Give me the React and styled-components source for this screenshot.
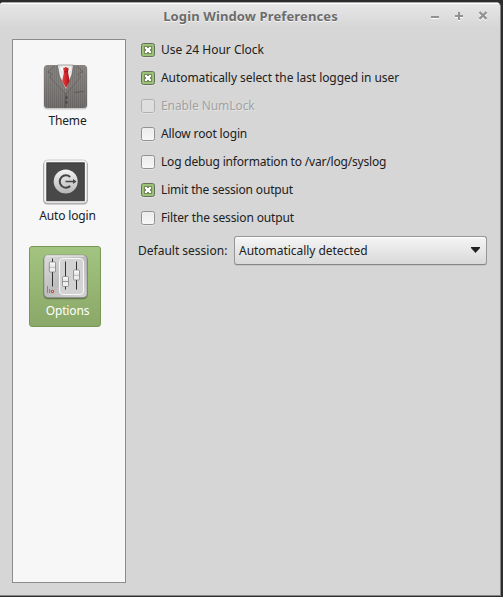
import React from "react";
import styled, { createGlobalStyle, css } from "styled-components";

const GlobalStyle = createGlobalStyle`
  * { box-sizing: border-box; }
  body { margin: 0; background: #2d2d2d; overflow: hidden; }
`;

const Desktop = styled.div`
  width: 503px;
  height: 597px;
  padding: 2px 2px 1px 0;
  background: #2d2d2d;
  font-family: "Noto Sans", sans-serif;
  font-size: 12px;
  color: #212121;
`;

const Window = styled.main`
  height: 594px;
  display: flex;
  flex-direction: column;
  background: #d6d6d6;
  border: solid #868686;
  border-width: 0 1px 1px 0;
  border-radius: 4px 5px 0 0;
  overflow: hidden;
`;

const TitleBar = styled.header`
  flex: none;
  height: 26px;
  display: grid;
  grid-template-columns: 1fr auto;
  background: linear-gradient(#e7e7e7, #d6d6d6);
  border-top: 1px solid #aaa;
  box-shadow: inset 0 1px #fff;
`;

const Title = styled.h1`
  margin: 0;
  padding: 2px 0 0 72px;
  text-align: center;
  font-size: 13px;
  line-height: 22px;
  font-weight: 700;
  letter-spacing: 0.12px;
  color: #6c6c6c;
  text-shadow: 0 1px #f5f5f5;
`;

const WindowButtons = styled.div`
  display: flex;
  gap: 12px;
  padding: 7px 11px 0 0;
`;

const WindowButton = styled.svg`
  width: 12px;
  height: 13px;
  fill: none;
  stroke: #929292;
  stroke-width: 2;
  filter: drop-shadow(0 1px 0 #fff);
`;

const Content = styled.div`
  flex: 1;
  min-height: 0;
  display: flex;
  padding: 11px 13px 12px 12px;
`;

const Sidebar = styled.nav`
  width: 114px;
  height: 544px;
  padding: 16px;
  display: flex;
  flex-direction: column;
  gap: 14px;
  background: #f7f7f7;
  border: 1px solid #8c8c8c;
`;

const NavItem = styled.div`
  width: 72px;
  height: 81px;
  flex: none;
  padding: 6px 0 0;
  display: flex;
  flex-direction: column;
  align-items: center;
  border: 1px solid transparent;
  border-radius: 3px;
  ${(p) => p.$selected && css`
    background: linear-gradient(#a3c480, #8aa868);
    border-color: #789755;
    color: #fff;
  `}
`;

const NavIcon = styled.svg`
  width: 48px;
  height: 48px;
`;

const NavLabel = styled.span`
  padding: 1px 0 0 5px;
  line-height: 18px;
  letter-spacing: -0.16px;
  white-space: nowrap;
`;

const Options = styled.section`
  flex: 1;
  padding: 0 0 0 12px;
`;

const CheckRow = styled.div`
  height: 28px;
  padding: 4px 0 0 3px;
  display: flex;
  align-items: flex-start;
  gap: 6px;
  line-height: 14px;
  letter-spacing: ${(p) => p.$tracking || 0}px;
  white-space: nowrap;
  ${(p) => p.$disabled && css`
    color: #a2a2a2;
    text-shadow: 1px 1px #e5e5e5;
  `}
`;

const CheckBox = styled.span`
  width: 14px;
  height: 14px;
  border: 1px solid ${(p) => (p.$checked ? "#65725a" : p.$disabled ? "#b0b0b0" : "#929292")};
  border-radius: 2.5px;
  background: ${(p) => (p.$checked ? "#9cc078" : p.$disabled ? "#dedede" : "linear-gradient(#ececec, #f7f7f7)")};
  box-shadow: 0 1px #e2e2e2;
  display: flex;
`;

const CheckMark = styled.svg`
  width: 12px;
  height: 12px;
`;

const SessionRow = styled.div`
  display: flex;
  align-items: flex-start;
  height: 30px;
  margin-top: 1px;
`;

const SessionLabel = styled.span`
  width: 96px;
  flex: none;
  line-height: 29px;
  white-space: nowrap;
`;

const Select = styled.div`
  width: 253px;
  height: 29px;
  padding: 0 6px 1px 4px;
  display: flex;
  align-items: center;
  justify-content: space-between;
  letter-spacing: -0.04px;
  background: linear-gradient(#f5f5f5, #d9d9d9);
  border: 1px solid #969696;
  border-bottom-color: #858585;
  border-radius: 3px;
  box-shadow: inset 0 1px #fff, 0 1px #c5c5c5;
`;

const Arrow = styled.svg`
  width: 9px;
  height: 6px;
`;

function ThemeIcon() {
  return (
    <NavIcon viewBox="0 0 48 48">
      <defs>
        <linearGradient id="suit" x2="0" y2="1">
          <stop stopColor="#83807e" /><stop offset="1" stopColor="#666362" />
        </linearGradient>
        <linearGradient id="tie">
          <stop stopColor="#e84848" /><stop offset=".5" stopColor="#d3252b" /><stop offset="1" stopColor="#a81018" />
        </linearGradient>
        <pattern id="pinstripe" width="2" height="4" patternUnits="userSpaceOnUse">
          <path d="M.5 0v4" stroke="#aaa" strokeWidth=".6" opacity=".35" />
        </pattern>
      </defs>
      <rect x="2.5" y="3" width="44" height="43.5" rx="4" fill="#777" opacity=".35" />
      <rect x="3" y="2" width="43" height="43" rx="3.5" fill="url(#suit)" />
      <path d="m13 3-6.5 6L11 11l-2.5 3L25 31l14.5-17-2.5-3 5-2-5.5-6" fill="#787572" stroke="#55514f" strokeWidth=".7" />
      <rect x="3" y="2" width="43" height="43" rx="3.5" fill="url(#pinstripe)" />
      <path d="M16.5 2h15.800l-1.300 9-6 16-6.500-14z" fill="#ededed" stroke="#54504e" strokeWidth=".5" />
      <path d="m18 3 5 2-2 5zM31 3l-4.500 2 2.500 5z" fill="#fff" stroke="#bcbcbc" strokeWidth=".4" />
      <path d="m22 5.500 2.800-1.500 2.900 1.500-.7 3.200 1.500 9.300-3.400 7-4-7 2-9.300z" fill="url(#tie)" />
      <path d="m22.700 9 4.300-.5" stroke="#8d1014" strokeWidth=".7" />
      <path d="m33 29.500 10-1M25 31l-1 14" fill="none" stroke="#53504d" strokeWidth=".8" />
      <g fill="#484542"><circle cx="25.500" cy="34.500" r="1.200" /><circle cx="25.500" cy="39.500" r="1.200" /></g>
    </NavIcon>
  );
}

function LoginIcon() {
  return (
    <NavIcon viewBox="0 0 48 48">
      <defs>
        <linearGradient id="disc" x2="0" y2="1">
          <stop stopColor="#f4f4f4" /><stop offset="1" stopColor="#b6b6b6" />
        </linearGradient>
      </defs>
      <rect x="2" y="2.5" width="45" height="44" rx="4.5" fill="#777" opacity=".6" />
      <rect x="3" y="2" width="43" height="43" rx="3.5" fill="#f7f7f7" stroke="#bbb" strokeWidth=".7" />
      <rect x="5.8" y="4.8" width="37.5" height="38" fill="#484848" stroke="#333" strokeWidth=".8" />
      <circle cx="24.7" cy="23.5" r="12" fill="url(#disc)" />
      <path d="M29.2 19a6.2 6.2 0 1 0 0 9" fill="none" stroke="#444" strokeWidth="2" />
      <path d="M24.5 23.5h9" stroke="#444" strokeWidth="1.4" />
      <path d="m32 21 3.5 2.5-3.5 2.5z" fill="#444" />
    </NavIcon>
  );
}

function MixerIcon() {
  return (
    <NavIcon viewBox="0 0 48 48">
      <defs>
        <linearGradient id="panel" x2="1" y2="1">
          <stop stopColor="#ddd" /><stop offset=".5" stopColor="#bdbdbd" /><stop offset="1" stopColor="#d5d5d5" />
        </linearGradient>
        <linearGradient id="knob" x2="0" y2="1">
          <stop stopColor="#fff" /><stop offset=".45" stopColor="#e5e5e5" /><stop offset=".5" stopColor="#999" /><stop offset=".6" stopColor="#eee" />
        </linearGradient>
      </defs>
      <rect x="2.3" y="2.3" width="44.4" height="44" rx="4.5" fill="#394529" opacity=".5" />
      <rect x="3" y="2" width="43" height="42.5" rx="4" fill="url(#panel)" stroke="#888" strokeWidth=".6" />
      <path d="M5 3h38" stroke="#eee" />
      <rect x="18.5" y="5.5" width="24" height="36" rx="3.5" fill="#d3d3d3" stroke="#f7f7f7" />
      <path d="M11.5 5.5v28M24.5 8.500v28M35.500 8.500v28" stroke="#333" />
      <g fill="url(#knob)" stroke="#777" strokeWidth=".7">
        <rect x="8.3" y="9" width="6.2" height="10" rx="1" />
        <rect x="21.500" y="23.500" width="6" height="10" rx="1" />
        <rect x="32.500" y="17" width="6" height="10" rx="1" />
      </g>
      <path d="M6.500 33v7m2-4v4" stroke="#777" strokeWidth=".8" />
      <circle cx="11.500" cy="38.500" r="1.700" fill="#c05140" />
      <circle cx="11.500" cy="38.500" r=".5" fill="#fff" />
    </NavIcon>
  );
}

function CheckOption({ label, checked, disabled, tracking }) {
  return (
    <CheckRow $disabled={disabled} $tracking={tracking}>
      <CheckBox $checked={checked} $disabled={disabled}>
        {checked && (
          <CheckMark viewBox="0 0 12 12">
            <rect x="2" y="2" width="8" height="8" fill="#748c5c" />
            <path d="M3 3h2v1h2V3h2v2H8v2h1v2H7V8H5v1H3V7h1V5H3z" fill="#fff" />
          </CheckMark>
        )}
      </CheckBox>
      <span>{label}</span>
    </CheckRow>
  );
}

const options = [
  { label: "Use 24 Hour Clock", checked: true },
  { label: "Automatically select the last logged in user", checked: true, tracking: -0.07 },
  { label: "Enable NumLock", disabled: true, tracking: -0.07 },
  { label: "Allow root login", tracking: -0.14 },
  { label: "Log debug information to /var/log/syslog", tracking: -0.18 },
  { label: "Limit the session output", checked: true, tracking: -0.16 },
  { label: "Filter the session output", tracking: -0.13 },
];

export default function App() {
  return (
    <Desktop>
      <GlobalStyle />
      <Window>
        <TitleBar>
          <Title>Login Window Preferences</Title>
          <WindowButtons>
            <WindowButton viewBox="0 0 12 13"><path d="M2 7h8" /></WindowButton>
            <WindowButton viewBox="0 0 12 13"><path d="M2 6h8M6 2v8" /></WindowButton>
            <WindowButton viewBox="0 0 12 13"><path d="m2.5 2 7 7m0-7-7 7" strokeWidth="2.4" /></WindowButton>
          </WindowButtons>
        </TitleBar>
        <Content>
          <Sidebar>
            <NavItem><ThemeIcon /><NavLabel>Theme</NavLabel></NavItem>
            <NavItem><LoginIcon /><NavLabel>Auto login</NavLabel></NavItem>
            <NavItem $selected><MixerIcon /><NavLabel>Options</NavLabel></NavItem>
          </Sidebar>
          <Options>
            {options.map((option) => <CheckOption key={option.label} {...option} />)}
            <SessionRow>
              <SessionLabel>Default session:</SessionLabel>
              <Select>
                <span>Automatically detected</span>
                <Arrow viewBox="0 0 9 6"><path d="M0 0h9v1L4.5 6 0 1z" fill="#222" /></Arrow>
              </Select>
            </SessionRow>
          </Options>
        </Content>
      </Window>
    </Desktop>
  );
}
